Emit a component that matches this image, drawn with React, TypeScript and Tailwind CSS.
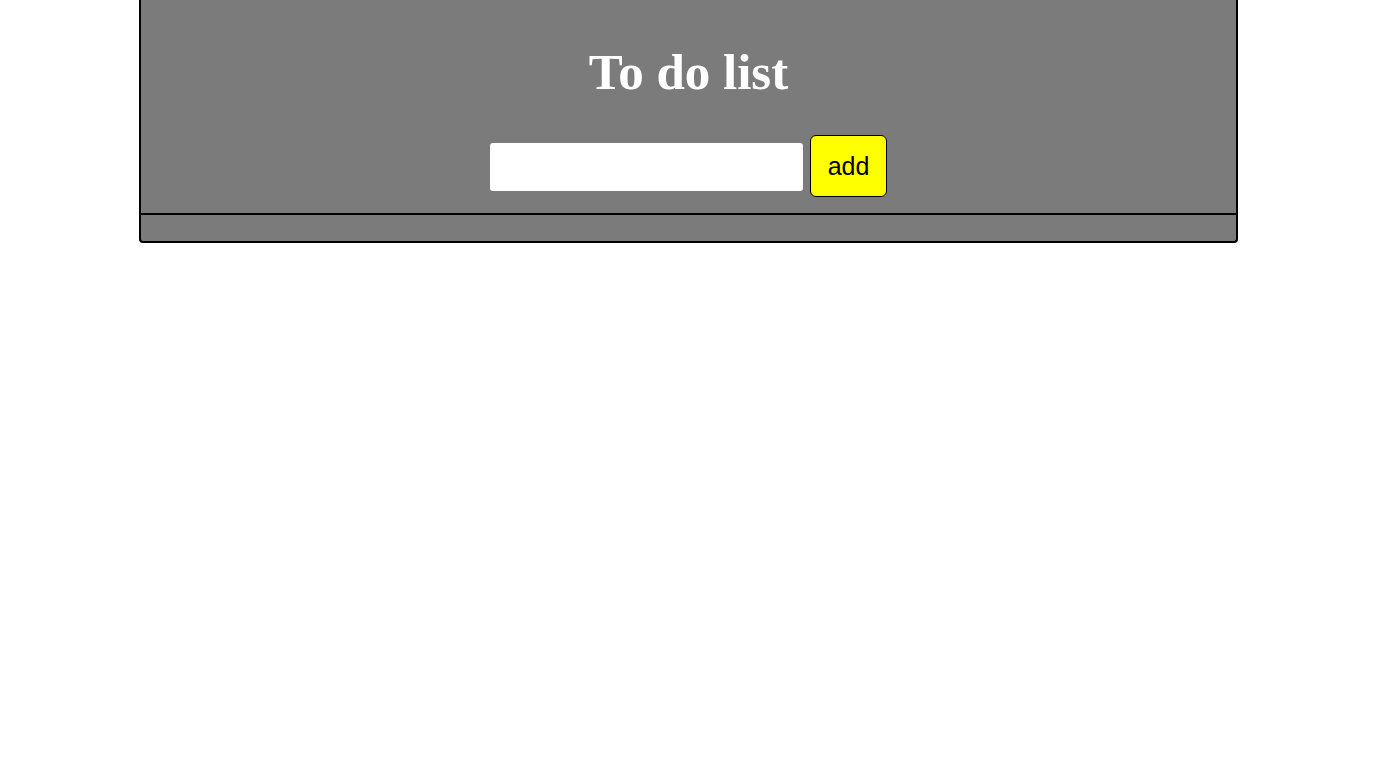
import React, { useState } from 'react';

const App: React.FC = () => {
  const [text, setText] = useState('');
  const [items, setItems] = useState<string[]>([]);

  const addItem = () => {
    if (!text.trim()) return;
    setItems([...items, text.trim()]);
    setText('');
  };

  return (
    <div className="min-h-screen bg-white">
      <div className="ml-[139px] w-[1099px] bg-[#7b7b7b] border-x-2 border-b-2 border-black rounded-b-[4px]">
        <div className="flex flex-col items-center border-b-2 border-black pb-[16px]">
          <h1 className="mt-[44px] text-[51px] leading-[56px] font-bold text-white font-['Liberation_Serif','Times_New_Roman',serif]">
            To do list
          </h1>
          <div className="mt-[35px] flex items-center gap-[7px]">
            <input
              value={text}
              onChange={(e) => setText(e.target.value)}
              className="mt-[2px] w-[313px] h-[48px] bg-white rounded-[3px] outline-none px-2 text-[20px] font-['Liberation_Sans',Arial,sans-serif]"
            />
            <button
              onClick={addItem}
              className="w-[77px] h-[62px] bg-[#ffff00] border border-black rounded-[6px] text-[25px] leading-[28px] text-black font-['Liberation_Sans',Arial,sans-serif]"
            >
              add
            </button>
          </div>
        </div>
        <div className="min-h-[26px]">
          {items.map((item, i) => (
            <div key={i} className="px-4 py-1 text-white font-['Liberation_Sans',Arial,sans-serif]">
              {item}
            </div>
          ))}
        </div>
      </div>
    </div>
  );
};

export default App;
